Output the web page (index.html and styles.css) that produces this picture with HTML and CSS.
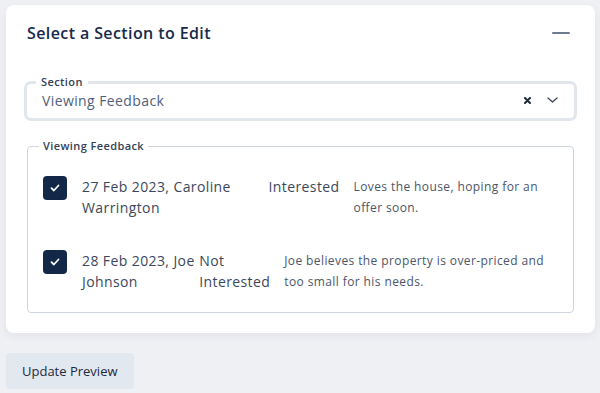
FILE: index.html
```html
<!DOCTYPE html>
<html lang="en">
<head>
    <meta charset="UTF-8">
    <meta name="viewport" content="width=device-width, initial-scale=1.0">
    <title>Edit section</title>
    <link rel="stylesheet" href="styles.css">
</head>
<body>
    <div class="page">
        <section class="card">
            <header class="card-head">
                <h2>Select a Section to Edit</h2>
                <button class="collapse" aria-label="Collapse">
                    <svg width="18" height="2" viewBox="0 0 18 2"><rect width="18" height="2" rx="1" fill="currentColor"/></svg>
                </button>
            </header>

            <fieldset class="select-field">
                <legend>Section</legend>
                <div class="select">
                    <span class="select-value">Viewing Feedback</span>
                    <span class="select-clear">
                        <svg width="7" height="7" viewBox="0 0 7 7"><path d="M1 1l5 5M6 1L1 6" stroke="currentColor" stroke-width="2" stroke-linecap="round"/></svg>
                    </span>
                    <span class="select-arrow">
                        <svg width="11" height="6" viewBox="0 0 11 6"><path d="M1 1l4.5 4 4.5-4" fill="none" stroke="currentColor" stroke-width="1.3" stroke-linecap="round" stroke-linejoin="round"/></svg>
                    </span>
                </div>
            </fieldset>

            <fieldset class="feedback">
                <legend>Viewing Feedback</legend>
                <div class="feedback-list">
                    <label class="feedback-row">
                        <span class="check">
                            <svg width="10" height="8" viewBox="0 0 10 8"><path d="M1.5 4.2l2.4 2.3L8.5 1.5" fill="none" stroke="#fff" stroke-width="1.8" stroke-linecap="round" stroke-linejoin="round"/></svg>
                        </span>
                        <span class="who">27 Feb 2023, Caroline Warrington</span>
                        <span class="status">Interested</span>
                        <span class="note">Loves the house, hoping for an offer soon.</span>
                    </label>
                    <label class="feedback-row">
                        <span class="check">
                            <svg width="10" height="8" viewBox="0 0 10 8"><path d="M1.5 4.2l2.4 2.3L8.5 1.5" fill="none" stroke="#fff" stroke-width="1.8" stroke-linecap="round" stroke-linejoin="round"/></svg>
                        </span>
                        <span class="who">28 Feb 2023, Joe Johnson</span>
                        <span class="status">Not Interested</span>
                        <span class="note">Joe believes the property is over-priced and too small for his needs.</span>
                    </label>
                </div>
            </fieldset>
        </section>

        <button class="update">Update Preview</button>
    </div>
</body>
</html>
```

FILE: styles.css
```css
*{
    margin: 0;
    padding: 0;
    box-sizing: border-box;
}
body{
    background-color: #eef0f4;
    font-family: "Open Sans", "Noto Sans", sans-serif;
    letter-spacing: .025em;
    color: #3c475b;
}
.page{
    padding: 5px 5px 0 6px;
}
.card{
    background-color: #fff;
    border-radius: 8px;
    box-shadow: 0 3px 10px rgba(30, 41, 59, .06);
    padding: 16px 21px 20px 21px;

    .card-head{
        display: flex;
        align-items: center;
        justify-content: space-between;
        h2{
            font-size: 16px;
            line-height: 24px;
            font-weight: 600;
            color: #172a4a;
        }
    }
    .collapse{
        border: none;
        background: none;
        color: #6e7a8f;
        display: flex;
        margin-right: 4px;
    }
}

/* outlined select with notched label */
.select-field{
    margin: 30px -3px 0;
    border: 3px solid #e1e6ed;
    border-radius: 7px;
    padding: 0 9px 7px;
    legend{
        padding: 0 5px;
        font-size: 11px;
        line-height: 14px;
        font-weight: 600;
        color: #344156;
    }
    .select{
        display: flex;
        align-items: center;
        height: 22px;
        padding-left: 6px;
    }
    .select-value{
        flex: 1;
        font-size: 14px;
        color: #4f5f7b;
    }
    .select-clear{
        display: flex;
        color: #1f2a3c;
        margin-right: 16px;
    }
    .select-arrow{
        display: flex;
        color: #3b4658;
        margin-right: 7px;
    }
}

.feedback{
    margin-top: 18px;
    border: 1px solid #cfd5de;
    border-radius: 4px;
    padding: 0 15px 20px;
    legend{
        margin-left: -4px;
        padding: 0 4px;
        font-size: 11px;
        line-height: 14px;
        font-weight: 600;
        color: #344156;
    }
}
.feedback-list{
    display: flex;
    flex-direction: column;
    row-gap: 32px;
    padding-top: 23px;
}
.feedback-row{
    display: flex;
    align-items: flex-start;
    line-height: 21px;

    .check{
        flex: none;
        width: 24px;
        height: 24px;
        border-radius: 4px;
        background-color: #132848;
        display: flex;
        align-items: center;
        justify-content: center;
        margin-right: 15px;
    }
    .who, .status{
        font-size: 14px;
        font-weight: 500;
        color: #3c475b;
    }
    .status{
        padding-right: 14px;
    }
    .note{
        font-size: 12px;
        color: #4b5568;
    }
}

.update{
    margin-top: 20px;
    height: 36px;
    padding: 0 16px;
    border: none;
    border-radius: 4px;
    background-color: #e2e8f0;
    font-family: inherit;
    font-size: 13px;
    color: #1e293b;
}
```
